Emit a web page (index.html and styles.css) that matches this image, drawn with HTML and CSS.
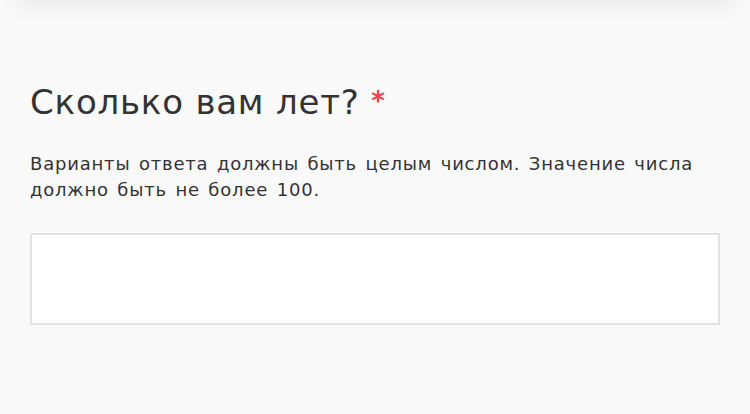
FILE: index.html
```html
<!DOCTYPE html>
<html lang="ru">
<head>
<meta charset="utf-8">
<link rel="stylesheet" href="styles.css">
</head>
<body>
<div class="prev-card"></div>
<main class="question">
  <h2 class="title">Сколько вам лет? <span class="req">*</span></h2>
  <p class="hint">Варианты ответа должны быть целым числом. Значение числа должно быть не более 100.</p>
  <input class="answer" type="text">
</main>
</body>
</html>
```
FILE: styles.css
```css
html, body {
  margin: 0;
  padding: 0;
  background: #f9f9f9;
}
body {
  font-family: "DejaVu Sans", "Open Sans", sans-serif;
  color: #333;
  overflow: hidden;
}
.prev-card {
  height: 40px;
  margin: -40px 16px 0;
  background: #fafafa;
  box-shadow: 0 4px 24px rgba(0, 0, 0, 0.08);
}
.question {
  padding: 78px 30px 0;
}
.title {
  margin: 0;
  font-size: 34px;
  font-weight: 400;
  line-height: 46px;
  letter-spacing: 0.8px;
  color: #333;
}
.req {
  color: #f2404a;
  font-size: 26px;
  font-weight: 700;
  vertical-align: 4px;
  letter-spacing: 0;
}
.hint {
  margin: 26px 0 0;
  max-width: 685px;
  font-size: 18px;
  line-height: 26px;
  letter-spacing: 0.8px;
  word-spacing: 2px;
  color: #333;
}
.answer {
  display: block;
  box-sizing: border-box;
  width: 690px;
  height: 92px;
  margin-top: 30px;
  border: 2px solid #e2e2e2;
  background: #fff;
  outline: none;
}
```
